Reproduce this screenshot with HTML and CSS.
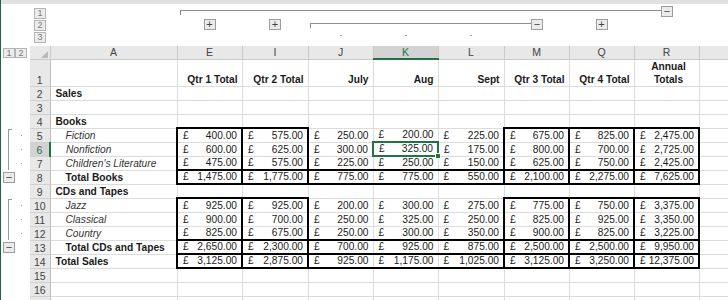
FILE: index.html
```html
<!DOCTYPE html>
<html lang="en">
<head>
    <meta charset="UTF-8">
    <title>Sales</title>
    <link rel="stylesheet" href="styles.css">
</head>
<body>

<div class="topStrip"></div>

<!-- column outline bar -->
<div class="colOutline">
    <div class="lvlBtns">
        <span class="lvl">1</span>
        <span class="lvl">2</span>
        <span class="lvl">3</span>
    </div>

    <div class="grp1"><i class="bracket"></i><span class="olBtn">−</span></div>

    <div class="g2 cE"><span class="olBtn">+</span></div>
    <div class="g2 cI"><span class="olBtn">+</span></div>
    <div class="grp2"><i class="bracket"></i><span class="olBtn">−</span></div>
    <div class="g2 cQ"><span class="olBtn">+</span></div>

    <div class="g3 cJ"><i class="dot"></i></div>
    <div class="g3 cK"><i class="dot"></i></div>
    <div class="g3 cL"><i class="dot"></i></div>
</div>

<table class="sheet">
    <colgroup>
        <col class="wOut">
        <col class="wHead">
        <col class="wA">
        <col class="w65">
        <col class="w66">
        <col class="w65">
        <col class="w65">
        <col class="w66">
        <col class="w65">
        <col class="w65">
        <col class="w65">
        <col class="wRest">
    </colgroup>

    <tr class="colHead">
        <td class="out"><div class="lvlRow"><span class="lvl">1</span><span class="lvl">2</span></div></td>
        <td class="corner"><div class="cornerIn"><i class="tri"></i></div></td>
        <td class="ch">A</td>
        <td class="ch">E</td>
        <td class="ch">I</td>
        <td class="ch">J</td>
        <td class="ch on">K</td>
        <td class="ch">L</td>
        <td class="ch">M</td>
        <td class="ch">Q</td>
        <td class="ch">R</td>
        <td class="ch"></td>
    </tr>

    <tr class="r1">
        <td class="out"></td>
        <td class="rh">1</td>
        <td class="a"></td>
        <td class="h">Qtr 1 Total</td>
        <td class="h">Qtr 2 Total</td>
        <td class="h">July</td>
        <td class="h">Aug</td>
        <td class="h">Sept</td>
        <td class="h">Qtr 3 Total</td>
        <td class="h">Qtr 4 Total</td>
        <td class="h ctr">Annual<br>Totals</td>
        <td></td>
    </tr>

    <tr>
        <td class="out"></td>
        <td class="rh">2</td>
        <td class="a">Sales</td>
        <td></td><td></td><td></td><td></td><td></td><td></td><td></td><td></td><td></td>
    </tr>
    <tr>
        <td class="out"></td>
        <td class="rh">3</td>
        <td class="a"></td>
        <td></td><td></td><td></td><td></td><td></td><td></td><td></td><td></td><td></td>
    </tr>
    <tr>
        <td class="out"></td>
        <td class="rh">4</td>
        <td class="a">Books</td>
        <td></td><td></td><td></td><td></td><td></td><td></td><td></td><td></td><td></td>
    </tr>

    <tr class="first">
        <td class="out"><div class="olRow"><i class="vbar top"></i><i class="dot"></i></div></td>
        <td class="rh">5</td>
        <td class="a ind it">Fiction</td>
        <td class="m b"><div class="acc"><span>£</span><span>400.00</span></div></td>
        <td class="m b"><div class="acc"><span>£</span><span>575.00</span></div></td>
        <td class="m"><div class="acc"><span>£</span><span>250.00</span></div></td>
        <td class="m"><div class="acc"><span>£</span><span>200.00</span></div></td>
        <td class="m"><div class="acc"><span>£</span><span>225.00</span></div></td>
        <td class="m b"><div class="acc"><span>£</span><span>675.00</span></div></td>
        <td class="m b"><div class="acc"><span>£</span><span>825.00</span></div></td>
        <td class="m b"><div class="acc"><span>£</span><span>2,475.00</span></div></td>
        <td></td>
    </tr>
    <tr>
        <td class="out"><div class="olRow"><i class="vbar"></i><i class="dot"></i></div></td>
        <td class="rh on">6</td>
        <td class="a ind it">Nonfiction</td>
        <td class="m b"><div class="acc"><span>£</span><span>600.00</span></div></td>
        <td class="m b"><div class="acc"><span>£</span><span>625.00</span></div></td>
        <td class="m"><div class="acc"><span>£</span><span>300.00</span></div></td>
        <td class="m sel"><div class="acc"><span>£</span><span>325.00</span></div><i class="handle"></i></td>
        <td class="m"><div class="acc"><span>£</span><span>175.00</span></div></td>
        <td class="m b"><div class="acc"><span>£</span><span>800.00</span></div></td>
        <td class="m b"><div class="acc"><span>£</span><span>700.00</span></div></td>
        <td class="m b"><div class="acc"><span>£</span><span>2,725.00</span></div></td>
        <td></td>
    </tr>
    <tr class="last">
        <td class="out"><div class="olRow"><i class="vbar"></i><i class="dot"></i></div></td>
        <td class="rh">7</td>
        <td class="a ind it">Children's Literature</td>
        <td class="m b"><div class="acc"><span>£</span><span>475.00</span></div></td>
        <td class="m b"><div class="acc"><span>£</span><span>575.00</span></div></td>
        <td class="m"><div class="acc"><span>£</span><span>225.00</span></div></td>
        <td class="m"><div class="acc"><span>£</span><span>250.00</span></div></td>
        <td class="m"><div class="acc"><span>£</span><span>150.00</span></div></td>
        <td class="m b"><div class="acc"><span>£</span><span>625.00</span></div></td>
        <td class="m b"><div class="acc"><span>£</span><span>750.00</span></div></td>
        <td class="m b"><div class="acc"><span>£</span><span>2,425.00</span></div></td>
        <td></td>
    </tr>
    <tr class="tot">
        <td class="out"><span class="olBtn">−</span></td>
        <td class="rh">8</td>
        <td class="a ind">Total Books</td>
        <td class="m b"><div class="acc"><span>£</span><span>1,475.00</span></div></td>
        <td class="m b"><div class="acc"><span>£</span><span>1,775.00</span></div></td>
        <td class="m"><div class="acc"><span>£</span><span>775.00</span></div></td>
        <td class="m"><div class="acc"><span>£</span><span>775.00</span></div></td>
        <td class="m"><div class="acc"><span>£</span><span>550.00</span></div></td>
        <td class="m b"><div class="acc"><span>£</span><span>2,100.00</span></div></td>
        <td class="m b"><div class="acc"><span>£</span><span>2,275.00</span></div></td>
        <td class="m b"><div class="acc"><span>£</span><span>7,625.00</span></div></td>
        <td></td>
    </tr>

    <tr>
        <td class="out"></td>
        <td class="rh">9</td>
        <td class="a">CDs and Tapes</td>
        <td></td><td></td><td></td><td></td><td></td><td></td><td></td><td></td><td></td>
    </tr>

    <tr class="first">
        <td class="out"><div class="olRow"><i class="vbar top"></i><i class="dot"></i></div></td>
        <td class="rh">10</td>
        <td class="a ind it">Jazz</td>
        <td class="m b"><div class="acc"><span>£</span><span>925.00</span></div></td>
        <td class="m b"><div class="acc"><span>£</span><span>925.00</span></div></td>
        <td class="m"><div class="acc"><span>£</span><span>200.00</span></div></td>
        <td class="m"><div class="acc"><span>£</span><span>300.00</span></div></td>
        <td class="m"><div class="acc"><span>£</span><span>275.00</span></div></td>
        <td class="m b"><div class="acc"><span>£</span><span>775.00</span></div></td>
        <td class="m b"><div class="acc"><span>£</span><span>750.00</span></div></td>
        <td class="m b"><div class="acc"><span>£</span><span>3,375.00</span></div></td>
        <td></td>
    </tr>
    <tr>
        <td class="out"><div class="olRow"><i class="vbar"></i><i class="dot"></i></div></td>
        <td class="rh">11</td>
        <td class="a ind it">Classical</td>
        <td class="m b"><div class="acc"><span>£</span><span>900.00</span></div></td>
        <td class="m b"><div class="acc"><span>£</span><span>700.00</span></div></td>
        <td class="m"><div class="acc"><span>£</span><span>250.00</span></div></td>
        <td class="m"><div class="acc"><span>£</span><span>325.00</span></div></td>
        <td class="m"><div class="acc"><span>£</span><span>250.00</span></div></td>
        <td class="m b"><div class="acc"><span>£</span><span>825.00</span></div></td>
        <td class="m b"><div class="acc"><span>£</span><span>925.00</span></div></td>
        <td class="m b"><div class="acc"><span>£</span><span>3,350.00</span></div></td>
        <td></td>
    </tr>
    <tr class="last">
        <td class="out"><div class="olRow"><i class="vbar"></i><i class="dot"></i></div></td>
        <td class="rh">12</td>
        <td class="a ind it">Country</td>
        <td class="m b"><div class="acc"><span>£</span><span>825.00</span></div></td>
        <td class="m b"><div class="acc"><span>£</span><span>675.00</span></div></td>
        <td class="m"><div class="acc"><span>£</span><span>250.00</span></div></td>
        <td class="m"><div class="acc"><span>£</span><span>300.00</span></div></td>
        <td class="m"><div class="acc"><span>£</span><span>350.00</span></div></td>
        <td class="m b"><div class="acc"><span>£</span><span>900.00</span></div></td>
        <td class="m b"><div class="acc"><span>£</span><span>825.00</span></div></td>
        <td class="m b"><div class="acc"><span>£</span><span>3,225.00</span></div></td>
        <td></td>
    </tr>
    <tr class="tot">
        <td class="out"><span class="olBtn">−</span></td>
        <td class="rh">13</td>
        <td class="a ind">Total CDs and Tapes</td>
        <td class="m b"><div class="acc"><span>£</span><span>2,650.00</span></div></td>
        <td class="m b"><div class="acc"><span>£</span><span>2,300.00</span></div></td>
        <td class="m"><div class="acc"><span>£</span><span>700.00</span></div></td>
        <td class="m"><div class="acc"><span>£</span><span>925.00</span></div></td>
        <td class="m"><div class="acc"><span>£</span><span>875.00</span></div></td>
        <td class="m b"><div class="acc"><span>£</span><span>2,500.00</span></div></td>
        <td class="m b"><div class="acc"><span>£</span><span>2,500.00</span></div></td>
        <td class="m b"><div class="acc"><span>£</span><span>9,950.00</span></div></td>
        <td></td>
    </tr>
    <tr class="tot">
        <td class="out"></td>
        <td class="rh">14</td>
        <td class="a">Total Sales</td>
        <td class="m b"><div class="acc"><span>£</span><span>3,125.00</span></div></td>
        <td class="m b"><div class="acc"><span>£</span><span>2,875.00</span></div></td>
        <td class="m"><div class="acc"><span>£</span><span>925.00</span></div></td>
        <td class="m"><div class="acc"><span>£</span><span>1,175.00</span></div></td>
        <td class="m"><div class="acc"><span>£</span><span>1,025.00</span></div></td>
        <td class="m b"><div class="acc"><span>£</span><span>3,125.00</span></div></td>
        <td class="m b"><div class="acc"><span>£</span><span>3,250.00</span></div></td>
        <td class="m b"><div class="acc"><span>£</span><span>12,375.00</span></div></td>
        <td></td>
    </tr>

    <tr>
        <td class="out"></td>
        <td class="rh">15</td>
        <td class="a"></td>
        <td></td><td></td><td></td><td></td><td></td><td></td><td></td><td></td><td></td>
    </tr>
    <tr>
        <td class="out"></td>
        <td class="rh">16</td>
        <td class="a"></td>
        <td></td><td></td><td></td><td></td><td></td><td></td><td></td><td></td><td></td>
    </tr>
    <tr>
        <td class="out"></td>
        <td class="rh"></td>
        <td class="a"></td>
        <td></td><td></td><td></td><td></td><td></td><td></td><td></td><td></td><td></td>
    </tr>
</table>

</body>
</html>
```

FILE: styles.css
```css
* {
    margin: 0;
    padding: 0;
    box-sizing: border-box;
}

body {
    width: 728px;
    height: 300px;
    overflow: hidden;
    background: #fff;
    font-family: "Liberation Sans", Arial, sans-serif;
    font-size: 10.2px;
    color: #1a1a1a;
    box-shadow: inset 1px 0 0 #2d5c44;
}

i {
    display: block;
}

.topStrip {
    height: 4px;
    margin-left: 1px;
    background: #e1e1e1;
}

/* outline bar above the column headers */
.colOutline {
    display: grid;
    grid-template-columns: 30px 20px 127px 65px 66px 65px 65px 66px 65px 65px 65px 1fr;
    grid-template-rows: 14px 13px 15px;
}

.lvlBtns {
    grid-column: 2;
    grid-row: 1 / 4;
    display: flex;
    flex-direction: column;
    align-items: center;
    gap: 1px;
    padding-top: 4px;
}

.lvl {
    display: block;
    width: 12px;
    height: 11px;
    border: 1px solid #b4b4b4;
    background: #ececec;
    color: #7a7a7a;
    font-size: 9px;
    line-height: 9px;
    text-align: center;
}

.olBtn {
    display: flex;
    align-items: center;
    justify-content: center;
    width: 12px;
    height: 11px;
    border: 1px solid #9d9d9d;
    background: #ebebeb;
    color: #444;
    font-size: 11px;
    line-height: 1;
}

.bracket {
    flex: 1;
    height: 5px;
    border-top: 1px solid #8f8f8f;
    border-left: 1px solid #8f8f8f;
}

.grp1 {
    grid-column: 4 / 12;
    grid-row: 1;
    display: flex;
    padding: 0 26px 0 3px;
}

.grp1 .bracket {
    margin-top: 6px;
}

.grp1 .olBtn {
    margin-top: 2px;
}

.grp2 {
    grid-column: 6 / 10;
    grid-row: 2;
    display: flex;
    padding: 0 26px 0 2px;
}

.grp2 .bracket {
    margin-top: 5px;
}

.grp2 .olBtn {
    margin-top: 1px;
}

.g2 {
    grid-row: 2;
    display: flex;
    justify-content: center;
    padding-top: 1px;
}

.g3 {
    grid-row: 3;
    display: flex;
    justify-content: center;
    padding-top: 4px;
}

.dot {
    width: 2px;
    height: 1px;
    background: #a0a0a0;
}

.cE { grid-column: 4; }
.cI { grid-column: 5; }
.cJ { grid-column: 6; }
.cK { grid-column: 7; }
.cL { grid-column: 8; }
.cQ { grid-column: 10; }

/* sheet */
.sheet {
    border-collapse: collapse;
    table-layout: fixed;
    width: 728px;
}

.wOut { width: 30px; }
.wHead { width: 20px; }
.wA { width: 127px; }
.w65 { width: 65px; }
.w66 { width: 66px; }
.wRest { width: 29px; }

.sheet tr {
    height: 14px;
}

.sheet td {
    height: 14px;
    padding: 0;
    border: 1px solid #dcdcdc;
    line-height: 12px;
    vertical-align: bottom;
    white-space: nowrap;
}

.sheet td.out {
    border: none;
    vertical-align: middle;
}

.sheet tr.colHead,
.sheet tr.colHead td {
    height: 13px;
}

.sheet td.ch {
    border-color: #c9c9c9;
    border-top: none;
    background: #e8e8e8;
    color: #444;
    font-size: 10.5px;
    text-align: center;
    vertical-align: middle;
}

.sheet td.ch.on {
    background: #d3d3d3;
    color: #217346;
    border-bottom: 2px solid #217346;
}

.sheet td.corner {
    border-color: #c9c9c9;
    border-top: none;
    border-left: none;
    background: #e8e8e8;
}

.cornerIn {
    display: flex;
    justify-content: flex-end;
    align-items: flex-end;
    height: 12px;
    padding: 0 2px 1px 0;
}

.tri {
    width: 0;
    height: 0;
    border-left: 7px solid transparent;
    border-bottom: 7px solid #bababa;
}

.lvlRow {
    display: flex;
    padding-left: 3px;
}

.lvlRow .lvl {
    height: 10px;
    line-height: 8px;
}

.sheet td.rh {
    border-color: #d0d0d0;
    border-left: none;
    border-right-color: #bdbdbd;
    background: #e8e8e8;
    color: #444;
    font-size: 10.5px;
    text-align: center;
}

.sheet td.rh.on {
    background: #d3d3d3;
    color: #217346;
    border-right: 2px solid #217346;
}

.sheet tr.r1,
.sheet tr.r1 td {
    height: 27px;
}

.sheet td.a {
    padding-left: 5px;
    font-weight: bold;
}

.sheet td.ind {
    padding-left: 15px;
}

.sheet td.it {
    font-weight: normal;
    font-style: italic;
    color: #333;
}

.sheet td.h {
    padding-right: 4px;
    font-weight: bold;
    line-height: 13px;
    text-align: right;
}

.sheet td.h.ctr {
    padding: 0 0 0 4px;
    text-align: center;
}

.acc {
    display: flex;
    justify-content: space-between;
    padding: 0 4px 0 5px;
}

/* thick borders round the blocks */
.sheet td.b {
    border-left: 2px solid #000;
    border-right: 2px solid #000;
}

.sheet tr.first td.b {
    border-top: 2px solid #000;
}

.sheet tr.last td.b {
    border-bottom: 2px solid #000;
}

.sheet tr.tot td.m {
    border-top: 2px solid #000;
    border-bottom: 2px solid #000;
}

/* selected cell K6 */
.sheet td.sel {
    position: relative;
    border: 2px solid #217346;
}

.handle {
    position: absolute;
    right: -4px;
    bottom: -4px;
    width: 6px;
    height: 6px;
    background: #217346;
    border: 1px solid #fff;
}

/* row outline on the left */
.olRow {
    display: flex;
    align-items: center;
    height: 14px;
}

.vbar {
    align-self: stretch;
    width: 4px;
    margin-left: 8px;
    border-left: 1px solid #9a9a9a;
}

.vbar.top {
    margin-top: 1px;
    border-top: 1px solid #9a9a9a;
}

.olRow .dot {
    width: 1px;
    margin-left: 9px;
}

.out .olBtn {
    margin-left: 3px;
}
```
